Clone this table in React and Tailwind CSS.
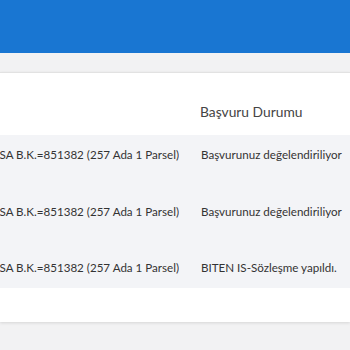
import React from 'react';

const rows = [
  { parcel: 'BURSA B.K.=851382 (257 Ada 1 Parsel)', status: 'Başvurunuz değelendiriliyor' },
  { parcel: 'BURSA B.K.=851382 (257 Ada 1 Parsel)', status: 'Başvurunuz değelendiriliyor' },
  { parcel: 'BURSA B.K.=851382 (257 Ada 1 Parsel)', status: 'BITEN IS-Sözleşme yapıldı.' },
];

const App = () => {
  return (
    <div className="w-[350px] h-[350px] overflow-hidden bg-[#f2f2f3] text-[#333] font-['Lato',_'Noto_Sans',_sans-serif]">
      {/* top app bar */}
      <div className="h-[53px] bg-[#1976d2]" />

      <div className="pt-[19px]">
        <div className="bg-white border-t border-[#e2e2e2] shadow-[0_1px_3px_rgba(0,0,0,0.12)] h-[250px]">
          {/* table head */}
          <div className="flex h-[62px] items-end pb-[12px]">
            <div className="w-[179px] shrink-0" />
            <div className="pl-[21px] text-[13.8px] text-[#444] whitespace-nowrap">Başvuru Durumu</div>
          </div>

          {/* table body */}
          <div className="bg-[#f3f4f7] pt-[10px] pb-[10px] flex flex-col gap-[36.5px]">
            {rows.map((row, i) => (
              <div key={i} className="flex h-[20px] items-center text-[11.6px] whitespace-nowrap">
                <div className="w-[179px] shrink-0 flex justify-end overflow-hidden">
                  <span>{row.parcel}</span>
                </div>
                <div className="pl-[22px]">{row.status}</div>
              </div>
            ))}
          </div>
        </div>
      </div>
    </div>
  );
};

export default App;
